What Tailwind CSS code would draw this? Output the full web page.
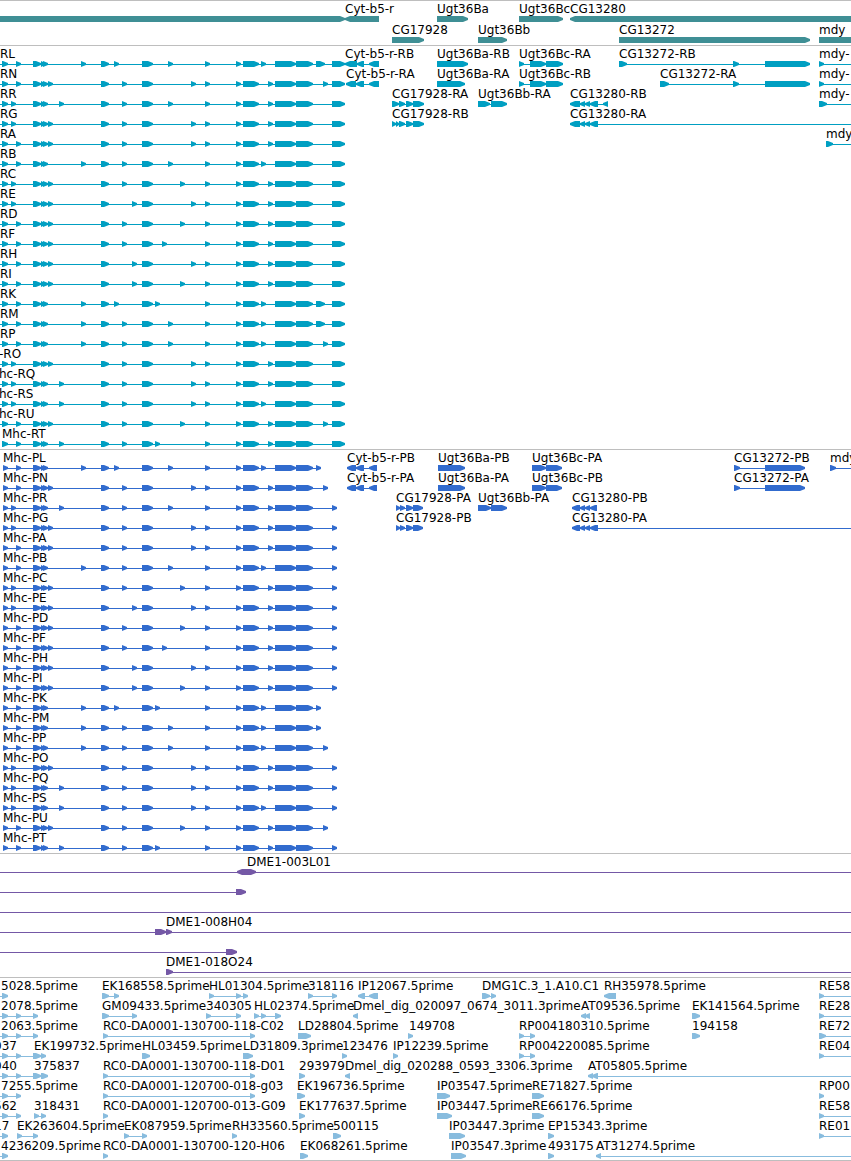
<!DOCTYPE html>
<html lang="en">
<head>
  <meta charset="utf-8">
  <meta name="viewport" content="width=device-width, initial-scale=1">
  <title>Mhc region</title>
  <script src="https://cdn.jsdelivr.net/npm/@tailwindcss/browser@4"></script>
</head>
<body class="bg-white text-black text-xs font-['DejaVu_Sans',sans-serif]">
  <main class="overflow-hidden border-b border-[#bebebe]">
    <section id="genes" aria-label="Genes" class="border-t border-[#bebebe] pb-[2px] text-[#3f8f95]"></section>
    <section id="transcripts" aria-label="Transcripts" class="border-t border-[#bebebe] pb-[3px] text-[#009fc2]"></section>
    <section id="proteins" aria-label="Coding sequences" class="border-t border-[#bebebe] pb-[3px] text-[#316bce]"></section>
    <section id="clones" aria-label="Clones" class="border-t border-[#bebebe] pb-[3px] text-[#7458a6]"></section>
    <section id="ests" aria-label="ESTs" class="border-t border-[#bebebe] pb-[2px] text-[#88bcde]"></section>
  </main>

  <script>
    // Each feature: [label, label x, blocks, line start, line end]
    // blocks: "start:end" pairs, a leading "<" points the block left
    const FAR = 4000

    const genes = [
      [['', 0, '-20:345'], ['Cyt-b5-r', 345, '<345:379'], ['Ugt36Ba', 437, '437:468'], ['Ugt36Bc', 519, '519:563'], ['CG13280', 570, '<570:4000']],
      [['CG17928', 392, '392:424'], ['Ugt36Bb', 478, '478:507'], ['CG13272', 619, '619:810'], ['mdy', 819, '819:4000']],
    ]

    // Alternative exons of Mhc
    const exons = {
      B: '16:21', C: '11:16', F: '48:53', G: '59:64', H: '81:86',
      J: '114:119', K: '122:127', L: '132:137',
      N: '155:160', O: '162:167', P: '168:173', Q: '180:185', R: '191:196',
      V: '261:266', W: '268:273', Y: '316:325', Z: '323:328',
    }
    const common = '33:41 41:45 43:48 101:109 142:153 205:210 236:241 243:259 275:296 296:313'

    const isoforms = [
      ['L', 'BHJPVY'], ['N', 'BFKRWZ'], ['R', 'CGKPW'], ['G', 'CFKRW'], ['A', 'BFKRW'],
      ['B', 'BHKPV'], ['C', 'CFKQW'], ['E', 'CFLRW'], ['D', 'BFKQW'], ['F', 'BFKOW'],
      ['H', 'BFLRW'], ['I', 'BFLQW'], ['K', 'BHJNVY'], ['M', 'BHKPVY'], ['P', 'BHKPVZ'],
      ['O', 'CFKRW'], ['Q', 'CGKRW'], ['S', 'CGKRV'], ['U', 'BFKQWZ'], ['T', 'BGKNW'],
    ]

    const transcriptLabels = { O: ['-RO', -1], Q: ['hc-RQ', -1], S: ['hc-RS', -1], U: ['hc-RU', -1], T: ['Mhc-RT', 2] }

    function transcript([id, alt]) {
      const [label, x] = transcriptLabels[id] || ['R' + id, 0]
      const blocks = ['2:8', common, ...[...alt].map(c => exons[c]), '332:345']
      return [label, x, blocks.join(' '), id === 'T' ? 2 : -20, 345]
    }

    function protein([id, alt]) {
      const last = alt.includes('Y') ? '316:321' : alt.includes('Z') ? '323:328' : '332:337'
      const blocks = ['3:8', common, ...[...alt].filter(c => c !== 'Y' && c !== 'Z').map(c => exons[c]), last]
      return ['Mhc-P' + id, 3, blocks.join(' '), 3, +last.split(':')[1]]
    }

    const transcriptNeighbours = [
      [['Cyt-b5-r-RB', 345, '<345:357 <357:364 <369:379'], ['Ugt36Ba-RB', 437, '437:468'], ['Ugt36Bc-RA', 519, '519:524 530:546 546:563'], ['CG13272-RB', 619, '619:627 733:739 765:810'], ['mdy-', 819, '819:824', 819, FAR]],
      [['Cyt-b5-r-RA', 346, '<346:356 <356:364 <369:379'], ['Ugt36Ba-RA', 437, '437:465'], ['Ugt36Bc-RB', 519, '519:524 530:546 546:563'], ['CG13272-RA', 660, '660:669 733:739 765:810'], ['mdy-', 819, '819:824', 819, FAR]],
      [['CG17928-RA', 392, '392:399 399:405 406:413 413:424'], ['Ugt36Bb-RA', 478, '478:490 491:507'], ['CG13280-RB', 570, '<570:580 <580:585 <585:590 <590:598 <603:608'], ['mdy-', 819, '819:827', 819, FAR]],
      [['CG17928-RB', 392, '392:396 396:399 399:405 406:413 413:424'], ['CG13280-RA', 570, '<570:580 <580:585 <585:590 <590:598', 570, FAR]],
      [['mdy', 826, '826:833', 826, FAR]],
    ]

    const proteinNeighbours = [
      [['Cyt-b5-r-PB', 347, '<347:356 <356:364 <369:377'], ['Ugt36Ba-PB', 438, '438:465'], ['Ugt36Bc-PA', 532, '532:546 546:562'], ['CG13272-PB', 734, '734:740 765:805'], ['mdy', 830, '830:836', 830, FAR]],
      [['Cyt-b5-r-PA', 347, '<347:356 <356:364 <369:377'], ['Ugt36Ba-PA', 438, '438:465'], ['Ugt36Bc-PB', 532, '532:546 546:562'], ['CG13272-PA', 734, '734:740 765:805']],
      [['CG17928-PA', 396, '396:400 400:405 406:413 413:423'], ['Ugt36Bb-PA', 478, '478:491 491:507'], ['CG13280-PB', 572, '<572:580 <580:585 <585:590 <590:597']],
      [['CG17928-PB', 396, '396:400 400:405 406:413 413:423'], ['CG13280-PA', 572, '<572:580 <580:585 <585:590 <590:598', 572, FAR]],
    ]

    const clones = [
      [['DME1-003L01', 247, '<237:247 246:256', -20, FAR]],
      [['', 0, '236:246', -20, 246]],
      [['', 0, '', -20, FAR]],
      [['DME1-008H04', 166, '155:166 166:172', -20, FAR]],
      [['', 0, '226:237', -20, 237]],
      [['DME1-018O24', 166, '166:173', 166, FAR]],
    ]

    const ests = [
      [['5028.5prime', 1, '2:8', -20, 8], ['EK168558.5prime', 102, '102:109 114:119'], ['HL01304.5prime', 209, '209:214 236:241 243:248'], ['318116', 308, '308:313 332:337'], ['IP12067.5prime', 358, '<358:365 <369:378'], ['DMG1C.3_1.A10.C1', 482, '482:490 491:496'], ['RH35978.5prime', 604, '<604:616'], ['RE58', 819, '819:824', 819, FAR]],
      [['2078.5prime', 1, '2:8 16:21 33:38', -20, 38], ['GM09433.5prime', 102, '102:109 132:137'], ['340305', 206, '206:211 236:241'], ['HL02374.5prime', 254, '254:259 261:266 275:281'], ['Dmel_dig_020097_0674_3011.3prime', 353, '<353:358'], ['AT09536.5prime', 581, '<581:586 <585:590'], ['EK141564.5prime', 692, '692:700'], ['RE28', 819, '819:824', 819, FAR]],
      [['2063.5prime', 1, '2:8 16:21 33:38', -20, 38], ['RC0-DA0001-130700-118-C02', 103, '103:108 250:255'], ['LD28804.5prime', 298, '298:311'], ['149708', 409, '408:413'], ['RP004180310.5prime', 519, '519:524 530:535'], ['194158', 692, '692:700'], ['RE72', 819, '819:826', 819, FAR]],
      [['037', -6, '2:8 16:21', -20, 34], ['EK199732.5prime', 34, '33:41 41:46'], ['HL03459.5prime', 142, '142:150'], ['LD31809.3prime', 243, '243:253'], ['123476', 342, '342:347'], ['IP12239.5prime', 393, '393:398'], ['RP004220085.5prime', 519, '519:524 530:535'], ['RE04', 819, '819:824', 819, FAR]],
      [['040', -6, '2:8 16:21', -20, 34], ['375837', 34, '33:41 41:48'], ['RC0-DA0001-130700-118-D01', 103, '103:108 250:255'], ['293979', 299, '299:305'], ['Dmel_dig_020288_0593_3306.3prime', 345, '<345:350'], ['AT05805.5prime', 588, '<588:593 <592:598', 588, FAR]],
      [['7255.5prime', 1, '2:8 16:21', -20, 21], ['RC0-DA0001-120700-018-g03', 103, '103:108 250:255'], ['EK196736.5prime', 297, '297:305'], ['IP03547.5prime', 437, '437:450'], ['RE71827.5prime', 532, '532:544'], ['RP00', 819, '819:824']],
      [['562', -6, '2:8 16:21', -20, 21], ['318431', 34, '34:39 41:46'], ['RC0-DA0001-120700-013-G09', 103, '103:108'], ['EK177637.5prime', 299, '299:305'], ['IP03447.5prime', 437, '437:452'], ['RE66176.5prime', 532, '532:544'], ['RE58', 819, '819:824', 819, FAR]],
      [['17', -6, '2:8', -20, 8], ['EK263604.5prime', 17, '17:22 33:38'], ['EK087959.5prime', 124, '124:129 142:147'], ['RH33560.5prime', 232, '232:237'], ['500115', 333, '333:341'], ['IP03447.3prime', 449, '449:465'], ['EP15343.3prime', 548, '548:554'], ['RE01', 819, '819:824', 819, FAR]],
      [['4236209.5prime', 1, '2:8', -20, 8], ['RC0-DA0001-130700-120-H06', 103, '103:108'], ['EK068261.5prime', 300, '300:308'], ['IP03547.3prime', 451, '451:466'], ['493175', 548, '548:554'], ['AT31274.5prime', 596, '<596:601', 596, FAR]],
    ]

    // Box with a blunt pointed end, 6px high
    function block(text) {
      const left = text[0] === '<'
      const [a, b] = text.replace('<', '').split(':').map(Number)
      const tip = Math.min(5, b - a)
      return left
        ? `M${b} 15H${a + tip}L${a} 17V19L${a + tip} 21H${b}Z`
        : `M${a} 15H${b - tip}L${b} 17V19L${b - tip} 21H${a}Z`
    }

    function shape([, , blocks, from, to]) {
      const parts = blocks.split(' ').filter(Boolean)
      const ends = parts.flatMap(p => p.replace('<', '').split(':').map(Number))
      const start = from ?? Math.min(...ends)
      const end = to ?? Math.max(...ends)
      return `<path d="M${start} 18H${end}V19H${start}Z"/>` + parts.map(p => `<path d="${block(p)}"/>`).join('')
    }

    function row(features, height) {
      const labels = features.filter(f => f[0])
        .map(f => `<span class="absolute top-0 whitespace-nowrap text-black" style="left:${f[1]}px">${f[0]}</span>`)
      return `<div class="relative ${height}">
        <svg class="absolute inset-0 size-full overflow-visible fill-current" aria-hidden="true">${features.map(shape).join('')}</svg>
        ${labels.join('')}
      </div>`
    }

    function draw(id, rows, height = 'h-5') {
      document.getElementById(id).innerHTML = rows.map(r => row(r, height)).join('')
    }

    draw('genes', genes, 'h-[21px]')
    draw('transcripts', isoforms.map((iso, i) => [transcript(iso), ...(transcriptNeighbours[i] || [])]))
    draw('proteins', isoforms.map((iso, i) => [protein(iso), ...(proteinNeighbours[i] || [])]))
    draw('clones', clones)
    draw('ests', ests)
  </script>
</body>
</html>
